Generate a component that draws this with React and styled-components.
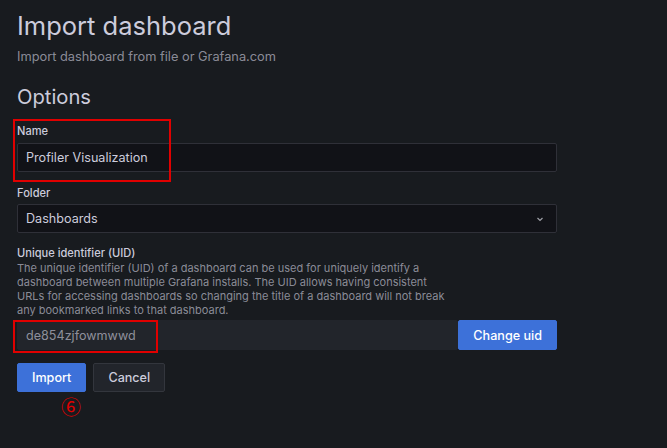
import React from 'react';
import styled, { createGlobalStyle } from 'styled-components';

const Global = createGlobalStyle`
  html, body { margin: 0; padding: 0; background: #181b1f; }
  body { font-family: Inter, "Noto Sans", sans-serif; color: #ccccdc; }
`;

const Page = styled.div`
  position: relative;
  width: 667px;
  height: 448px;
  box-sizing: border-box;
  padding: 9px 0 0 17px;
  background: #181b1f;
  overflow: hidden;
`;

const Title = styled.h1`
  margin: 0;
  font-size: 25.5px;
  font-weight: 400;
  line-height: 34px;
  color: #ccccdc;
`;

const Subtitle = styled.div`
  margin-top: 6px;
  font-size: 12.8px;
  line-height: 16px;
  color: rgba(204, 204, 220, 0.65);
`;

const Section = styled.h2`
  margin: 19px 0 0;
  font-size: 20.2px;
  font-weight: 400;
  line-height: 26px;
  color: #ccccdc;
`;

const Form = styled.div`
  width: 540px;
  margin-top: 14px;
  display: flex;
  flex-direction: column;
`;

const Field = styled.div`
  display: flex;
  flex-direction: column;
  margin-bottom: ${({ $gap }) => $gap || 0}px;
`;

const Label = styled.label`
  font-size: 11.1px;
  font-weight: 500;
  line-height: 14px;
  color: #ccccdc;
  margin-bottom: ${({ $mb }) => $mb ?? 5}px;
`;

const Description = styled.div`
  font-size: 11px;
  line-height: 14px;
  color: rgba(204, 204, 220, 0.65);
  margin: -4px 0 3px;
`;

const Input = styled.div`
  height: 29px;
  flex-shrink: 0;
  box-sizing: border-box;
  display: flex;
  align-items: center;
  justify-content: space-between;
  padding: 0 11px 0 8px;
  background: #111217;
  border: 1px solid #2f3038;
  border-radius: 2px;
  font-size: 12.6px;
  color: #ccccdc;
`;

const UidInput = styled(Input)`
  flex: 1;
  height: 30px;
  background: #22252b;
  border-color: #22252b;
  color: rgba(204, 204, 220, 0.65);
`;

const Row = styled.div`
  display: flex;
  height: 30px;
`;

const Button = styled.button`
  height: ${({ $h }) => $h || 29}px;
  box-sizing: border-box;
  padding: 0 ${({ $px }) => $px || 14}px;
  border-radius: 2px;
  font-family: Inter, "Noto Sans", sans-serif;
  font-size: 12.6px;
  font-weight: 500;
  cursor: pointer;
  background: ${({ $primary }) => ($primary ? '#3d71d9' : '#22252b')};
  color: ${({ $primary }) => ($primary ? '#ffffff' : '#ccccdc')};
  border: 1px solid ${({ $primary }) => ($primary ? '#3d71d9' : '#33363d')};
`;

const Actions = styled.div`
  display: flex;
  gap: 7px;
  margin-top: 13px;
`;

const Mark = styled.div`
  position: absolute;
  left: ${({ $x }) => $x}px;
  top: ${({ $y }) => $y}px;
  width: ${({ $w }) => $w}px;
  height: ${({ $h }) => $h}px;
  border: 2px solid #e00000;
  box-sizing: border-box;
  pointer-events: none;
`;

const Step = styled.div`
  position: absolute;
  left: 61px;
  top: 395px;
  font-family: "Noto Sans CJK SC", "Noto Sans CJK JP", serif;
  font-size: 20px;
  line-height: 24px;
  color: #e00000;
`;

const Chevron = () => (
  <svg width="10" height="10" viewBox="0 0 10 10">
    <path d="M2.5 4l2.5 2.5L7.5 4" fill="none" stroke="#9fa1a8" strokeWidth="1.2" />
  </svg>
);

export default function App() {
  return (
    <Page>
      <Global />
      <Title>Import dashboard</Title>
      <Subtitle>Import dashboard from file or Grafana.com</Subtitle>
      <Section>Options</Section>
      <Form>
        <Field $gap={14}>
          <Label $mb={5}>Name</Label>
          <Input>Profiler Visualization</Input>
        </Field>
        <Field $gap={13}>
          <Label $mb={4}>Folder</Label>
          <Input>
            Dashboards
            <Chevron />
          </Input>
        </Field>
        <Field>
          <Label>Unique identifier (UID)</Label>
          <Description>
            The unique identifier (UID) of a dashboard can be used for uniquely identify a<br />
            dashboard between multiple Grafana installs. The UID allows having consistent<br />
            URLs for accessing dashboards so changing the title of a dashboard will not break<br />
            any bookmarked links to that dashboard.
          </Description>
          <Row>
            <UidInput>de854zjfowmwwd</UidInput>
            <Button $primary $h={30} $px={14}>Change uid</Button>
          </Row>
        </Field>
      </Form>
      <Actions>
        <Button $primary>Import</Button>
        <Button>Cancel</Button>
      </Actions>
      <Mark $x={13} $y={119} $w={158} $h={63} />
      <Mark $x={13} $y={320} $w={145} $h={33} />
      <Step>⑥</Step>
    </Page>
  );
}
